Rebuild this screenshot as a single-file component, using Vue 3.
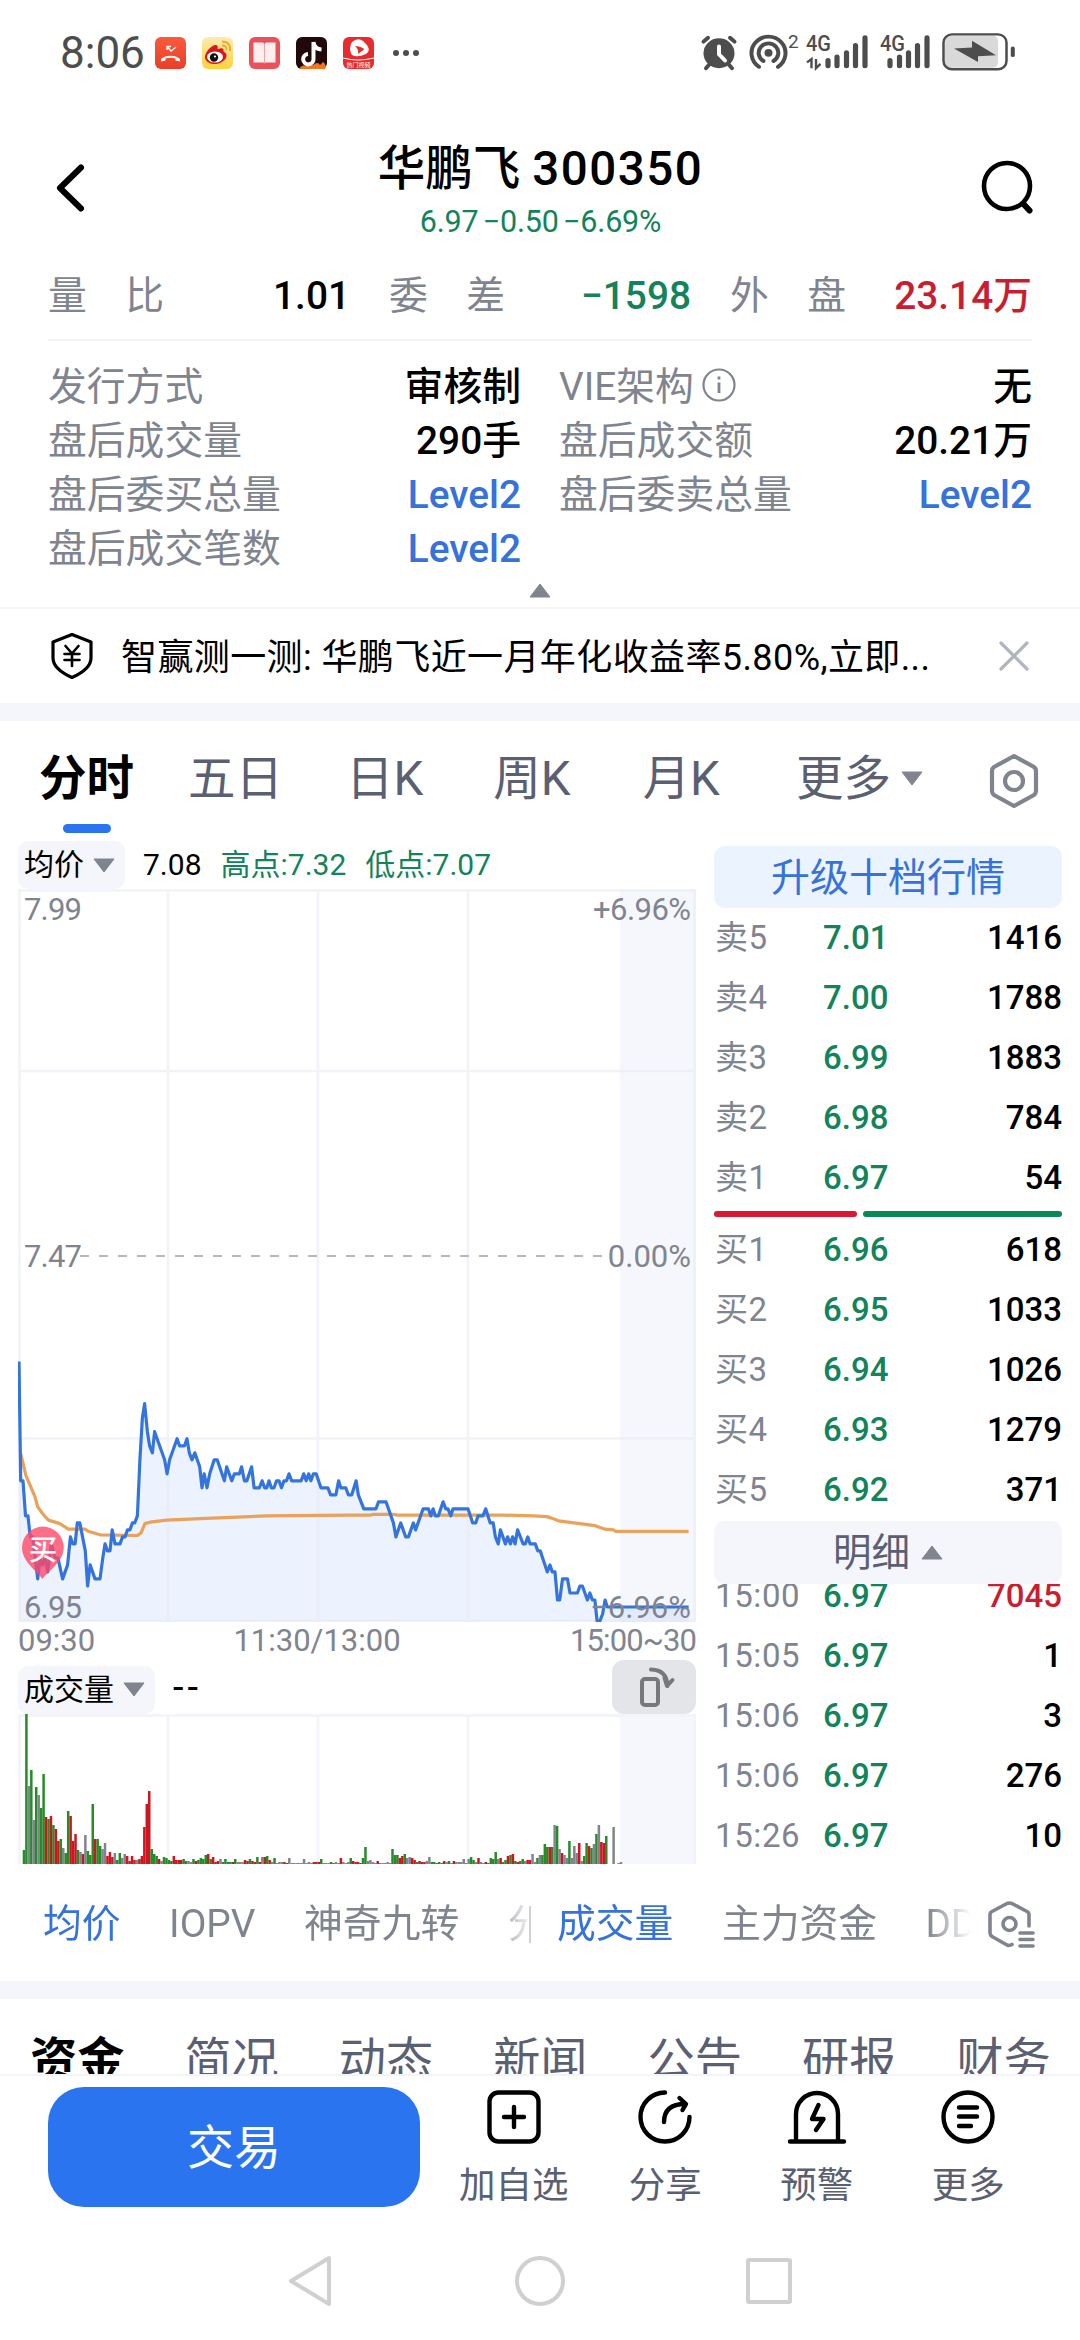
<template>
  <div class="page">
    <header class="status">
      <span class="clock">8:06</span>
      <div class="apps">
        <svg viewBox="0 0 31 32">
          <defs>
            <linearGradient id="call" x2="0" y2="1"><stop stop-color="#fb5a3c" /><stop offset="1" stop-color="#e93f28" /></linearGradient>
          </defs>
          <rect width="31" height="32" rx="6" fill="url(#call)" />
          <path d="M12 13V9.500H16M12 9.500L16 14L21 10" fill="none" stroke="#fff" stroke-width="1.300" />
          <path d="M6 24.500V22C10 17.500 21 17.500 25 22V24.500L20.500 23.500V21.500Q15.500 20 10.500 21.500V23.500Z" fill="#fff" />
        </svg>
        <svg viewBox="0 0 31 32">
          <defs>
            <linearGradient id="weibo" x2="0" y2="1"><stop stop-color="#fdebb0" /><stop offset="1" stop-color="#ffd23c" /></linearGradient>
          </defs>
          <rect width="31" height="32" rx="6" fill="url(#weibo)" />
          <path d="M3 20C3 14 12 6 15 8.500C16.500 10 15 12 16 12C19 11 22 10.500 21.500 14C21.500 15.500 25 15.500 24.500 19C24 24 17 27.500 11.500 27C6.500 26.500 3 24 3 20Z" fill="#d8161c" />
          <ellipse cx="13" cy="20" rx="8" ry="5.500" fill="#fff" />
          <circle cx="12" cy="20.500" r="4.200" fill="#111" />
          <circle cx="13" cy="19.500" r="1.100" fill="#fff" />
          <path d="M20 8.500Q25 8.500 24.500 13M20 4.500Q29 4.500 28 14" fill="none" stroke="#eda735" stroke-width="1.800" />
        </svg>
        <svg viewBox="0 0 31 32">
          <rect width="31" height="32" rx="6" fill="#ea5159" />
          <path d="M4.500 5.500H14L15.500 7L17 5.500H26.500V25.500H16.500L15.500 26.500L14.500 25.500H4.500Z" fill="#fdeef0" />
          <path d="M15.500 7V26" stroke="#f0a3aa" stroke-width="1" />
        </svg>
        <svg viewBox="0 0 31 32">
          <rect width="31" height="32" rx="6" fill="#21090a" />
          <path d="M3 32Q6 27 10 29Q13 25 17 28Q22 24 24 28L27 25Q31 28 29 32Z" fill="#f4751f" />
          <path d="M17.500 5V21.500A5.200 5.200 0 1 1 12 17M17.500 5Q18 12 25.500 12.500" fill="none" stroke="#fff" stroke-width="4" />
        </svg>
        <svg viewBox="0 0 31 32">
          <rect width="31" height="32" rx="6" fill="#e82b2d" />
          <path d="M9 5Q16 -1 22 6Q29 13 23 17Q14 21 9 18Q5 12 9 5Z" fill="#fff" />
          <path d="M12 9Q21 10 21 12.500L15 17Q16 12 12 9Z" fill="#e82b2d" />
          <path d="M0 21Q15 25 31 21" fill="none" stroke="#fff" stroke-width="1.200" />
          <text x="15.500" y="30" font-size="6" text-anchor="middle" fill="#fff">热门视频</text>
        </svg>
      </div>
      <i class="dots"><b></b><b></b><b></b></i>
      <svg class="system" viewBox="700 31 320 47.500" preserveAspectRatio="none">
        <g fill="#4d4d4d" stroke="#4d4d4d" stroke-linecap="round">
          <circle cx="719" cy="55" r="15.500" stroke="none" />
          <path d="M703.500 43L708 39M734.500 43L730 39" stroke-width="4" />
          <path d="M709 67L706 70.500M729 67L732 70.500" stroke-width="4" />
          <path d="M719 48V56L725 62.500" fill="none" stroke="#fff" stroke-width="4" />
          <circle cx="768.500" cy="54.500" r="4" stroke="none" />
          <path d="M763.500 63A9.800 9.800 0 1 1 773.500 63M759 69A17 17 0 1 1 778 69" fill="none" stroke-width="4" />
          <path d="M828 62.500V68M837 59V68M846.500 54.500V68M855.500 47V68M865 39V68" stroke-width="5.200" />
          <path d="M890 62.500V68M899.500 59V68M908.500 54.500V68M917.500 47V68M927 39V68" stroke-width="5.200" />
          <path d="M807 64.500L811.500 61V70.500M816 61V70.500L820.500 66" fill="none" stroke-width="2.400" stroke-linecap="butt" />
          <path d="M1012.800 50V57" stroke-width="4" />
        </g>
        <rect x="945" y="37" width="53" height="33" rx="5" fill="#d9d9d9" />
        <rect x="943.500" y="35.500" width="63" height="36" rx="8.500" fill="none" stroke="#4d4d4d" stroke-width="2.500" />
        <path d="M954 50L972 49V42L996 57L978 58V64Z" fill="#4d4d4d" />
        <g fill="#4d4d4d" font-weight="500">
          <text x="788" y="50" font-size="19" font-weight="400">2</text>
          <text x="806" y="52.500" font-size="22" textLength="25" lengthAdjust="spacingAndGlyphs">4G</text>
          <text x="880" y="52.500" font-size="22" textLength="25" lengthAdjust="spacingAndGlyphs">4G</text>
        </g>
      </svg>
    </header>

    <div class="title-bar">
      <svg class="back" viewBox="0 0 36 56"><path d="M28 7.500L7 28L28 48.500" fill="none" stroke="#000" stroke-width="6" stroke-linecap="round" stroke-linejoin="round" /></svg>
      <div class="title">
        <h1>华鹏飞 <span>300350</span></h1>
        <p>6.97 −0.50 −6.69%</p>
      </div>
      <svg class="search" viewBox="0 0 60 60"><g fill="none" stroke="#000" stroke-width="4.600" stroke-linecap="round"><circle cx="28" cy="28" r="23" /><path d="M44.500 46L50.500 52.500" stroke-width="6" /></g></svg>
    </div>

    <div class="summary">
      <div v-for="item in summary" :key="item.value" class="pair">
        <span class="spread"><i v-for="c in item.label" :key="c">{{ c }}</i></span>
        <b :class="item.tone">{{ item.value }}</b>
      </div>
    </div>
    <div class="details">
      <div v-for="item in details" :key="item.label" class="pair">
        <span>{{ item.label }}<svg v-if="item.info" class="info" viewBox="0 0 36 36"><g fill="none" stroke="#80848f" stroke-width="2.200"><circle cx="18" cy="18" r="15.500" /><path d="M18 15.500V26M18 9.500V12.500" stroke-width="2.800" /></g></svg></span>
        <b :class="item.tone">{{ item.value }}</b>
      </div>
    </div>
    <div class="collapse"><svg viewBox="0 0 22 15"><path d="M11 1L21 14H1Z" fill="#80848f" stroke="#80848f" stroke-linejoin="round" /></svg></div>

    <div class="notice">
      <svg class="shield" viewBox="0 0 44 48"><g fill="none" stroke="#000" stroke-width="3.200" stroke-linejoin="round" stroke-linecap="round"><path d="M22 2.500L41 10V26Q41 37 22 45.500Q3 37 3 26V10Z" /><path d="M15.500 14L22 21.500L28.500 14M22 21.500V34M14.500 22H29.500M14.500 28H29.500" stroke-width="2.600" /></g></svg>
      <p>智赢测一测: 华鹏飞近一月年化收益率5.80%,立即...</p>
      <svg class="close" viewBox="0 0 30 30"><path d="M2 2L28 28M28 2L2 28" stroke="#b0b5c0" stroke-width="3.200" stroke-linecap="round" /></svg>
    </div>
    <div class="band"></div>

    <nav class="periods">
      <a v-for="(tab, i) in periods" :key="tab" :class="{ active: i === 0 }">{{ tab }}</a>
      <svg class="tri" viewBox="0 0 22 15"><path d="M1 1H21L11 14Z" fill="#80848f" stroke="#80848f" stroke-linejoin="round" /></svg>
      <svg class="hex" viewBox="0 0 50 56"><g fill="none" stroke="#80848f" stroke-width="4.200" stroke-linejoin="round"><path d="M25 3L45 14Q47 15.500 47 18V38Q47 40.500 45 42L25 53L5 42Q3 40.500 3 38V18Q3 15.500 5 14Z" /><circle cx="25" cy="28" r="9" /></g></svg>
    </nav>

    <main class="market">
      <section class="charts">
        <div class="legend">
          <span class="pill">均价<svg class="tri" viewBox="0 0 22 15"><path d="M1 1H21L11 14Z" fill="#80848f" stroke="#80848f" stroke-linejoin="round" /></svg></span>
          <em>7.08</em><em class="down">高点:7.32</em><em class="down">低点:7.07</em>
        </div>
        <svg class="price" viewBox="0 0 678 733">
          <rect x="602" width="76" height="733" fill="#f6f7fc" />
          <path :d="area" fill="#2a74f0" fill-opacity="0.09" />
          <path d="M0 1.500H678M0 182H678M0 549.500H678M0 731.500H678M1.500 0V733M150 0V733M300 0V733M450 0V733M676.500 0V733" fill="none" stroke="#e8ebf3" stroke-opacity="0.600" stroke-width="2.600" />
          <path d="M62 367H590" stroke="#b5b8c0" stroke-width="2.200" stroke-dasharray="9 10" />
          <path :d="average" fill="none" stroke="#eaa159" stroke-width="3.200" stroke-linejoin="round" />
          <path :d="line" fill="none" stroke="#3475dd" stroke-width="3.200" stroke-linejoin="round" />
          <path d="M24.500 690C20 683 4 673 4 658.500A20.800 20.800 0 0 1 45.800 658.500C45.800 673 29 683 24.500 690Z" fill="#ff4968" fill-opacity="0.800" />
          <text x="25" y="671" font-size="28.500" font-weight="500" text-anchor="middle" fill="#fff">买</text>
          <g fill="#80848f" font-size="31">
            <text x="6" y="31" textLength="58">7.99</text>
            <text x="6" y="378" textLength="58">7.47</text>
            <text x="6" y="729" textLength="58">6.95</text>
            <g text-anchor="end">
              <text x="673" y="31" textLength="98">+6.96%</text>
              <text x="673" y="378">0.00%</text>
              <text x="673" y="729">−6.96%</text>
            </g>
          </g>
        </svg>
        <div class="times"><span>09:30</span><span>11:30/13:00</span><span>15:00~30</span></div>
        <div class="legend second">
          <span class="pill">成交量<svg class="tri" viewBox="0 0 22 15"><path d="M1 1H21L11 14Z" fill="#80848f" stroke="#80848f" stroke-linejoin="round" /></svg></span>
          <em class="dash">--</em>
          <span class="rotate"><svg viewBox="0 0 84 54"><g fill="none" stroke="#77787c" stroke-width="4" stroke-linecap="round" stroke-linejoin="round"><rect x="30" y="19" width="16" height="26" rx="3" /><path d="M39 9.500Q55 10 55.500 26M52.500 18L55 26L60.500 20" /></g></svg></span>
        </div>
        <svg class="volume" viewBox="0 0 678 150">
          <rect x="602" width="76" height="150" fill="#f6f7fc" />
          <path d="M0 1.500H678M1.500 0V150M150 0V150M300 0V150M450 0V150M676.500 0V150" fill="none" stroke="#f3f4f9" stroke-width="2.800" />
          <rect v-for="bar in bars" :key="bar.x" :x="bar.x" :y="150 - bar.h" width="2.500" :height="bar.h" :fill="bar.fill" />
        </svg>
      </section>

      <section class="book">
        <div class="upgrade">升级十档行情</div>
        <div v-for="row in asks" :key="row[0]" class="quote"><span>{{ row[0] }}</span><b class="down">{{ row[1] }}</b><b>{{ row[2] }}</b></div>
        <div class="ratio"><i></i><i></i></div>
        <div v-for="row in bids" :key="row[0]" class="quote"><span>{{ row[0] }}</span><b class="down">{{ row[1] }}</b><b>{{ row[2] }}</b></div>
        <div class="ticks-head">明细<svg class="tri" viewBox="0 0 22 15"><path d="M11 1L21 14H1Z" fill="#80848f" stroke="#80848f" stroke-linejoin="round" /></svg></div>
        <div class="ticks">
          <div v-for="(row, i) in ticks" :key="i" class="quote"><span>{{ row[0] }}</span><b class="down">{{ row[1] }}</b><b :class="{ up: i === 0 }">{{ row[2] }}</b></div>
        </div>
      </section>
    </main>

    <div class="indicators">
      <div class="strip main-strip"><a class="on">均价</a><a>IOPV</a><a>神奇九转</a><a>分</a></div>
      <i class="divider"></i>
      <div class="strip sub-strip"><a class="on">成交量</a><a>主力资金</a><a>DD</a></div>
      <svg class="hex-list" viewBox="0 0 50 50"><g fill="none" stroke="#80848f" stroke-width="3.600" stroke-linecap="round" stroke-linejoin="round"><path d="M42 26V14.500Q42 12.500 40 11.500L25 3.500Q22.500 2.500 20 3.500L5 11.500Q3 12.500 3 14.500V33Q3 35 5 36.500L20 45Q22.500 46 25 44.500" /><circle cx="22.500" cy="24" r="6.500" /><path d="M33 33H46M33 39.500H46M33 46H46" /></g></svg>
    </div>
    <div class="band"></div>

    <nav class="sections">
      <a v-for="(tab, i) in sections" :key="tab" :class="{ active: i === 0 }">{{ tab }}</a>
    </nav>

    <footer class="actions">
      <button>交易</button>
      <div class="action">
        <svg viewBox="0 0 60 60"><g fill="none" stroke="#000" stroke-width="4.400" stroke-linecap="round"><rect x="5.500" y="5.500" width="49" height="49" rx="9" /><path d="M20 30H40M30 20V40" /></g></svg>
        加自选
      </div>
      <div class="action">
        <svg viewBox="0 0 60 60"><g fill="none" stroke="#000" stroke-width="4.400" stroke-linecap="round" stroke-linejoin="round"><path d="M30 5.500A24.500 24.500 0 1 0 54.500 30M29 35Q29 17 50 17M44.500 11L51 17L47.500 23" /></g></svg>
        分享
      </div>
      <div class="action">
        <svg viewBox="0 0 60 60"><g fill="none" stroke="#000" stroke-width="4.400" stroke-linecap="round" stroke-linejoin="round"><path d="M9 53V27A21 21 0 0 1 51 27V53M3 54.500H57M31.500 18L25 32H36.500L29 43" /></g></svg>
        预警
      </div>
      <div class="action">
        <svg viewBox="0 0 60 60"><g fill="none" stroke="#000" stroke-width="4.400" stroke-linecap="round"><circle cx="30" cy="30" r="24.500" /><path d="M21 20.500H39M21 29.500H39M21 39H33" /></g></svg>
        更多
      </div>
    </footer>

    <div class="system-nav">
      <svg viewBox="0 0 50 54"><path d="M43 4V50L5 27Z" /></svg>
      <svg viewBox="0 0 50 54"><circle cx="25" cy="27" r="23" /></svg>
      <svg viewBox="0 0 50 54"><rect x="4" y="6" width="42" height="42" rx="1" /></svg>
    </div>
  </div>
</template>

<script setup>
import { computed } from 'vue';

const summary = [
  { label: '量比', value: '1.01' },
  { label: '委差', value: '−1598', tone: 'down' },
  { label: '外盘', value: '23.14万', tone: 'up' }
];

const details = [
  { label: '发行方式', value: '审核制' },
  { label: 'VIE架构', value: '无', info: true },
  { label: '盘后成交量', value: '290手' },
  { label: '盘后成交额', value: '20.21万' },
  { label: '盘后委买总量', value: 'Level2', tone: 'link' },
  { label: '盘后委卖总量', value: 'Level2', tone: 'link' },
  { label: '盘后成交笔数', value: 'Level2', tone: 'link' }
];

const periods = ['分时', '五日', '日K', '周K', '月K', '更多'];
const sections = ['资金', '简况', '动态', '新闻', '公告', '研报', '财务'];

const asks = [
  ['卖5', '7.01', 1416],
  ['卖4', '7.00', 1788],
  ['卖3', '6.99', 1883],
  ['卖2', '6.98', 784],
  ['卖1', '6.97', 54]
];
const bids = [
  ['买1', '6.96', 618],
  ['买2', '6.95', 1033],
  ['买3', '6.94', 1026],
  ['买4', '6.93', 1279],
  ['买5', '6.92', 371]
];
const ticks = [
  ['15:00', '6.97', 7045],
  ['15:05', '6.97', 1],
  ['15:06', '6.97', 3],
  ['15:06', '6.97', 276],
  ['15:26', '6.97', 10]
];

// minute of the session, cents above 6.95
const prices = [
  [0, 37], [0.7, 20], [1.6, 20], [2.6, 15], [3.6, 15], [4.5, 12], [5.5, 12], [7.5, 6], [8.5, 9], [9.5, 8], [10.5, 9], [11.5, 7],
  [13, 11], [14.4, 9], [15.6, 9], [17.5, 6], [19.5, 8], [20.6, 12], [21.6, 11], [22.5, 11], [23.4, 14], [24.4, 14], [26.6, 10],
  [27.5, 5], [28.5, 8], [30.5, 6], [32.5, 6], [33.6, 9], [34.5, 11], [35.5, 10], [36.5, 10], [37.4, 13], [38.5, 11], [40.5, 11],
  [41.5, 12], [42.5, 12], [43.5, 13], [44.5, 13], [45.5, 14], [46.4, 14], [47.5, 15], [48.5, 23], [49.5, 29], [50.4, 31],
  [51.5, 27], [52.4, 25], [53.5, 24], [54.4, 27], [58.4, 23], [59.4, 21], [60.4, 23], [63.4, 26], [64.4, 25], [66.4, 25],
  [67.4, 26], [68.3, 24], [69.4, 23], [70.5, 24], [72.5, 22], [73.4, 19], [74.3, 21], [75.4, 19], [76.5, 21], [78.3, 23],
  [79.5, 23], [82.4, 20], [83.3, 22], [85.3, 20], [86.4, 21], [88.4, 21], [89.3, 22], [90.4, 20], [91.4, 20], [93.3, 22],
  [94.3, 19], [96.4, 19], [97.5, 20], [98.5, 19], [99.4, 19], [100.3, 20], [101.2, 19], [102.3, 19], [103.3, 20], [104.3, 20],
  [105.3, 19], [106.3, 20], [107.3, 20], [108.3, 21], [109.4, 20], [113.2, 20], [114.2, 21], [115.2, 20], [116.2, 21],
  [117.1, 20], [118.1, 21], [119.2, 21], [121.1, 19], [123.9, 19], [125, 18], [127.1, 18], [128.2, 20], [129.1, 19],
  [131.1, 19], [132.1, 18], [133.5, 18], [135.2, 20], [136.1, 18], [138.3, 16], [143.2, 16], [144.2, 17], [147.2, 17],
  [150.2, 14], [151.2, 12], [153.1, 14], [155.1, 12], [156.2, 12], [158.2, 14], [159.1, 13], [162.1, 16], [164.2, 16],
  [165.2, 15], [166.1, 16], [167, 15], [168.2, 15], [170.1, 17], [171.2, 16], [172.1, 16], [173.2, 15], [174.1, 16],
  [180.1, 16], [182, 14], [183.2, 14], [184.1, 15], [186.1, 15], [187.2, 16], [189, 14], [190.2, 14], [191.1, 12],
  [192.2, 11], [193.1, 13], [195.1, 11], [196, 12], [197.1, 11], [198, 12], [199, 11], [200, 13], [202.2, 11], [203.1, 11],
  [204.1, 12], [205, 11], [207.1, 11], [208.1, 10], [209.1, 10], [211.9, 7], [213, 8], [213.9, 7], [215, 7], [216, 3],
  [216.9, 3], [218, 6], [220, 6], [221, 4], [224, 4], [225, 5], [226, 5], [228, 3], [229, 4], [230, 3], [231, 3],
  [231.9, 0], [233, 0], [234.1, 1], [235.1, 3], [236, 2], [268.6, 2]
];
const averages = [
  [0.7, 23.9], [2.8, 20.7], [4.4, 19.4], [6.4, 17.7], [7.5, 16.3], [9.5, 15.3], [11.8, 14.4], [16.4, 13.9], [19.8, 13.1],
  [26.5, 13.1], [27.8, 12.8], [32.5, 12.3], [47.5, 12.2], [49, 12.6], [50.5, 13.9], [52.5, 14.1], [59.2, 14.4], [72.6, 14.6],
  [99.3, 15], [132.8, 15.1], [140.8, 15.1], [142.2, 15.2], [150.2, 15.2], [152, 15.1], [194.3, 15.1], [206.3, 15],
  [211.7, 14.9], [214.4, 14.6], [216.4, 14.3], [225, 13.9], [231.1, 13.6], [235.1, 13.1], [238.4, 13], [239.4, 12.8], [268.6, 12.8]
];

// one bar a minute: colour letter and height
const volumes = `g14 g150 y78 g94 y44 g77 y69 g56 g90 r47 g45 r48 g39 r35 r23 g25 y16 g11 g53 r48 r23 r30 g14 y12 r10 y29 g13 g9 g60 r25
g25 g18 y15 y21 r8 r12 r7 y11 g4 g11 y6 y10 r8 r3 r8 r4 y4 r5 r8 r37 r60 r73 g15 g10 g8 r5 y3 g7 g6 g4
g3 r8 r4 r4 r4 g5 g3 y3 y2 g5 r3 g4 g6 g5 g9 r10 g5 r7 r2 r3 y5 g2 g5 g2 g2 r2 g5 y2 y2 y2
r4 r3 g5 r3 r2 g7 r2 y7 r7 g8 r4 y2 g6 y1 y2 y2 r2 r1 y6 y1 y1 y1 y1 y1 y5 y1 y2 y1 r2 r2
r2 g5 y1 y1 y1 g2 g1 y2 y1 r6 y2 y1 y2 g6 r3 r2 r2 r1 g6 g17 y3 y4 y2 y1 r3 y1 y1 y1 y2 y1
g15 g9 g9 r6 r8 g10 y6 y7 r6 r4 g2 r3 r2 r2 y3 y7 g2 g2 g1 g2 g1 r3 y2 g3 y1 r3 y2 y2 y2 y5
y1 y5 g7 g4 y2 r6 y2 y1 r2 g1 g6 g5 g12 y5 r6 g2 g4 r8 g9 r10 g3 r2 g3 g5 y3 r4 r4 y10 y2 g6
y9 g9 g20 g17 r17 g17 y39 g38 y15 r11 y9 y6 g23 y6 y18 y11 r21 y3 g8 g21 r18 g16 y20 g30 y39 r22 r21 g28 y0 y0
y37 y0 y1 y2`;
const fills = { g: '#258c28', r: '#cd1620', y: '#80848f' };

const toPath = (points) => 'M' + points.map(([m, c]) => `${(1 + m * 2.493).toFixed(1)} ${(732 - c * 7.01).toFixed(1)}`).join('L');

const line = computed(() => toPath(prices));
const average = computed(() => toPath(averages));
const area = computed(() => `${line.value}V733H1Z`);
const bars = computed(() =>
  volumes.split(/\s+/).map((v, i) => ({ x: 4.7 + i * 2.457, h: Number(v.slice(1)), fill: fills[v[0]] }))
);
</script>

<style>
body {
  margin: 0;
  background: #fff;
}
</style>

<style scoped>
.page {
  width: 1080px;
  height: 2340px;
  overflow: hidden;
  display: flex;
  flex-direction: column;
  background: #fff;
  color: #000;
  font-family: Roboto, "Noto Sans CJK SC", sans-serif;
}

.page > * {
  flex: none;
  box-sizing: border-box;
}

svg {
  display: block;
  flex: none;
}

i,
em {
  font-style: normal;
}

b {
  font-weight: 500;
}

.down {
  color: #13835a;
}

.up {
  color: #c91d32;
}

.link {
  color: #3572da;
}

.status {
  height: 108px;
  padding: 0 0 3px 60px;
  display: flex;
  align-items: center;
}

.clock {
  width: 95px;
  font-size: 44px;
  color: #4d4d4d;
}

.apps {
  display: flex;
  gap: 16px;
}

.apps svg {
  width: 31px;
  height: 32px;
}

.dots {
  display: flex;
  gap: 4px;
  margin: 0 281px 0 19px;
}

.dots b {
  width: 6px;
  height: 6px;
  border-radius: 50%;
  background: #4d4d4d;
}

.system {
  width: 320px;
  height: 46px;
  margin-top: 1px;
}

.title-bar {
  height: 148px;
  padding: 27px 41px 0 53px;
  display: flex;
  justify-content: space-between;
}

.back {
  width: 36px;
  height: 56px;
  margin-top: 25px;
}

.title {
  text-align: center;
  padding-left: 13px;
}

.title h1 {
  margin: 0;
  font-size: 47.5px;
  line-height: 68px;
  font-weight: 500;
}

.title h1 span {
  letter-spacing: 1.5px;
}

.title p {
  margin: 0;
  font-size: 30.5px;
  line-height: 38px;
  letter-spacing: -0.2px;
  word-spacing: -3px;
  color: #13835a;
}

.search {
  width: 60px;
  height: 60px;
  margin-top: 23px;
}

.summary {
  height: 85px;
  margin: 0 48px;
  border-bottom: 2px solid #f3f4f7;
  display: grid;
  grid-template-columns: repeat(3, 302px);
  justify-content: space-between;
  padding-top: 13px;
}

.details {
  height: 216px;
  margin: 19px 48px 0;
  display: grid;
  grid-template-columns: 473px 473px;
  justify-content: space-between;
}

.pair {
  height: 54px;
  display: flex;
  justify-content: space-between;
  align-items: center;
  font-size: 38.8px;
  line-height: 54px;
}

.pair > span {
  color: #80848f;
  display: flex;
  align-items: center;
}

.pair .spread {
  width: 116px;
  justify-content: space-between;
}

.info {
  width: 36px;
  height: 36px;
  margin: 0 0 4px 7px;
}

.collapse {
  height: 33px;
  display: flex;
  justify-content: center;
  padding-top: 7px;
  border-bottom: 2px solid #f3f4f7;
}

.collapse svg {
  width: 22px;
  height: 15px;
}

.notice {
  height: 94px;
  display: flex;
  align-items: center;
  padding: 0 51px 0 50px;
  font-size: 36px;
}

.notice p {
  margin: 0 auto 5px 27px;
  letter-spacing: 0.4px;
}

.shield {
  width: 44px;
  height: 48px;
}

.close {
  width: 30px;
  height: 30px;
}

.band {
  height: 18px;
  background: #f4f6fb;
}

.periods {
  height: 120px;
  display: flex;
  padding: 18px 41px 0 39px;
  font-size: 47.5px;
  line-height: 80px;
  color: #5a6072;
}

.periods a {
  margin-right: 54px;
  height: 96px;
  position: relative;
}

.periods a:nth-of-type(2) {
  margin-right: 63px;
}

.periods a:nth-of-type(3) {
  margin-right: 70px;
}

.periods a:nth-of-type(4) {
  margin-right: 72px;
}

.periods a:nth-of-type(5) {
  margin-right: 76px;
}

.periods a:nth-of-type(6) {
  margin-right: 10px;
}

.periods .active {
  color: #000;
  font-weight: 700;
}

.periods .active::after {
  content: '';
  position: absolute;
  left: 24px;
  bottom: 2px;
  width: 48px;
  height: 9px;
  border-radius: 5px;
  background: #2a74f0;
}

.tri {
  width: 22px;
  height: 15px;
}

.periods .tri {
  margin-top: 32px;
}

.hex {
  width: 50px;
  height: 56px;
  margin: 14px 0 0 auto;
}

.market {
  height: 1023px;
  display: flex;
  padding: 0 18px;
  justify-content: space-between;
}

.charts {
  width: 678px;
}

.legend {
  height: 48px;
  display: flex;
  align-items: center;
  font-size: 30px;
  line-height: 48px;
}

.pill {
  display: flex;
  align-items: center;
  gap: 9px;
  padding: 0 10px 0 6px;
  margin-right: 18px;
  border-radius: 10px;
  background: #f4f6fb;
}

.legend em {
  margin-right: 19px;
}

.price {
  width: 678px;
  height: 733px;
}

.times {
  height: 38px;
  display: grid;
  grid-template-columns: 1fr auto 1fr;
  font-size: 31px;
  line-height: 38px;
  color: #80848f;
}

.times span:nth-child(2) {
  position: relative;
  left: -40px;
}

.times span:last-child {
  text-align: right;
  letter-spacing: -0.9px;
}

.legend.second {
  height: 54px;
  padding-top: 0;
}

.legend.second .pill {
  margin-top: 5px;
}

.legend .dash {
  font-size: 38px;
  letter-spacing: 4px;
}

.rotate {
  margin-left: auto;
  height: 54px;
  border-radius: 12px;
  background: #e4e5e9;
}

.rotate svg {
  width: 84px;
  height: 54px;
}

.volume {
  width: 678px;
  height: 150px;
}

.book {
  width: 348px;
  padding-top: 5px;
}

.upgrade {
  height: 62px;
  border-radius: 11px;
  background: #ebf3fe;
  color: #3572da;
  font-size: 39px;
  line-height: 64px;
  text-align: center;
}

.quote {
  height: 60px;
  line-height: 60px;
  display: grid;
  grid-template-columns: 109px 1fr auto;
  font-size: 33px;
}

.quote > span {
  padding-left: 1px;
  color: #80848f;
  letter-spacing: 0.6px;
}

.ratio {
  height: 12px;
  display: flex;
  gap: 6px;
  align-items: flex-start;
  padding-top: 3px;
  box-sizing: border-box;
}

.ratio i {
  width: 143px;
  height: 6px;
  border-radius: 3px;
  background: #d81932;
}

.ratio i:last-child {
  width: 199px;
  background: #0c8758;
}

.ticks-head {
  height: 63px;
  margin-top: 1px;
  border-radius: 11px;
  background: #f4f6fb;
  color: #5a6072;
  font-size: 38.5px;
  line-height: 65px;
  display: flex;
  align-items: center;
  justify-content: center;
  gap: 11px;
}

.ticks {
  height: 281px;
  overflow: hidden;
}

.ticks .quote:first-child {
  margin-top: -18px;
}

.indicators {
  height: 117px;
  display: flex;
  padding-left: 43px;
  font-size: 38.8px;
  line-height: 120px;
  color: #80848f;
}

.strip {
  display: flex;
  gap: 48.5px;
  overflow: hidden;
  white-space: nowrap;
}

.strip a {
  flex: none;
}

.strip .on {
  color: #3572da;
}

.main-strip {
  width: 484px;
  mask-image: linear-gradient(90deg, #000 445px, transparent 492px);
}

.divider {
  width: 2px;
  height: 37px;
  margin: 42px 26px 0 2px;
  background: #cfd1d7;
}

.sub-strip {
  width: 413px;
  mask-image: linear-gradient(90deg, #000 370px, transparent 414px);
}

.hex-list {
  width: 50px;
  height: 50px;
  margin: 36px 0 0 17px;
}

.sections {
  height: 75px;
  overflow: hidden;
  display: flex;
  gap: 60px;
  padding-left: 30px;
  font-size: 47.2px;
  line-height: 124px;
  color: #5a6072;
  white-space: nowrap;
}

.sections a {
  flex: none;
}

.sections .active {
  color: #000;
  font-weight: 700;
}

.actions {
  height: 154px;
  border-top: 2px solid #f3f4f7;
  display: flex;
  padding: 11px 0 0 48px;
}

.actions button {
  width: 372px;
  height: 120px;
  margin-right: 18px;
  padding: 0 0 8px;
  border: none;
  border-radius: 36px;
  background: #2a74f0;
  color: #fff;
  font: inherit;
  font-size: 47px;
}

.action {
  width: 151.500px;
  display: flex;
  flex-direction: column;
  align-items: center;
  font-size: 36.5px;
  line-height: 60px;
  color: #5a6072;
}

.action svg {
  width: 60px;
  height: 60px;
  margin-bottom: 9px;
}

.system-nav {
  display: flex;
  gap: 179px;
  justify-content: center;
  padding-top: 26px;
}

.system-nav svg {
  width: 50px;
  height: 54px;
  fill: none;
  stroke: #d0d0d0;
  stroke-width: 4;
  stroke-linejoin: round;
}
</style>
